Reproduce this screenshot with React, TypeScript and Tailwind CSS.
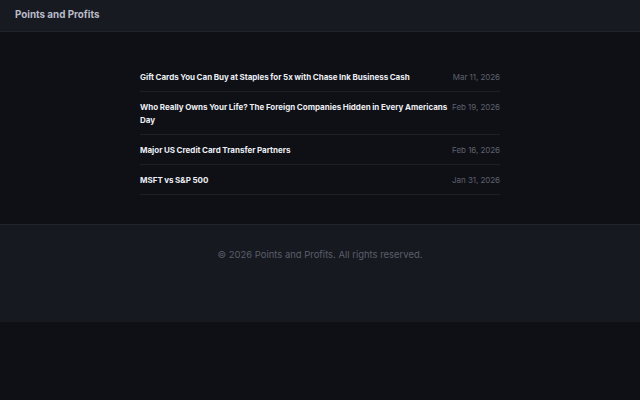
import React from "react";

const posts = [
  { title: "Gift Cards You Can Buy at Staples for 5x with Chase Ink Business Cash", date: "Mar 11, 2026" },
  { title: "Who Really Owns Your Life? The Foreign Companies Hidden in Every Americans Day", date: "Feb 19, 2026" },
  { title: "Major US Credit Card Transfer Partners", date: "Feb 16, 2026" },
  { title: "MSFT vs S&P 500", date: "Jan 31, 2026" },
];

const App = () => {
  return (
    <div
      className="min-h-[400px] bg-[#0f1016] text-white"
      style={{ fontFamily: "Inter, 'Liberation Sans', sans-serif" }}
    >
      {/* Header */}
      <header className="h-[32px] border-b border-[#22242d] bg-[#181a22] flex items-center px-[15px]">
        <h1 className="text-[9.8px] font-bold text-[#b9bcc7]">Points and Profits</h1>
      </header>

      {/* Posts */}
      <main className="pt-[30px] pb-[29px]">
        <ul className="w-[360px] mx-auto">
          {posts.map((post) => (
            <li
              key={post.title}
              className="flex justify-between gap-[2px] pt-[9px] pb-[7px] border-b border-[#1e2029]"
            >
              <a className="text-[8px] leading-[13px] font-bold [word-spacing:-0.35px] text-[#eceef3]">
                {post.title}
              </a>
              <span className="shrink-0 text-[8px] leading-[13px] tracking-[-0.05px] text-[#5d616d]">
                {post.date}
              </span>
            </li>
          ))}
        </ul>
      </main>

      {/* Footer */}
      <footer className="h-[98px] border-t border-[#22242d] bg-[#171920] pt-[22px] text-center">
        <p className="text-[9.45px] leading-[15px] text-[#5a5e6b]">
          © 2026 Points and Profits. All rights reserved.
        </p>
      </footer>
    </div>
  );
};

export default App;
